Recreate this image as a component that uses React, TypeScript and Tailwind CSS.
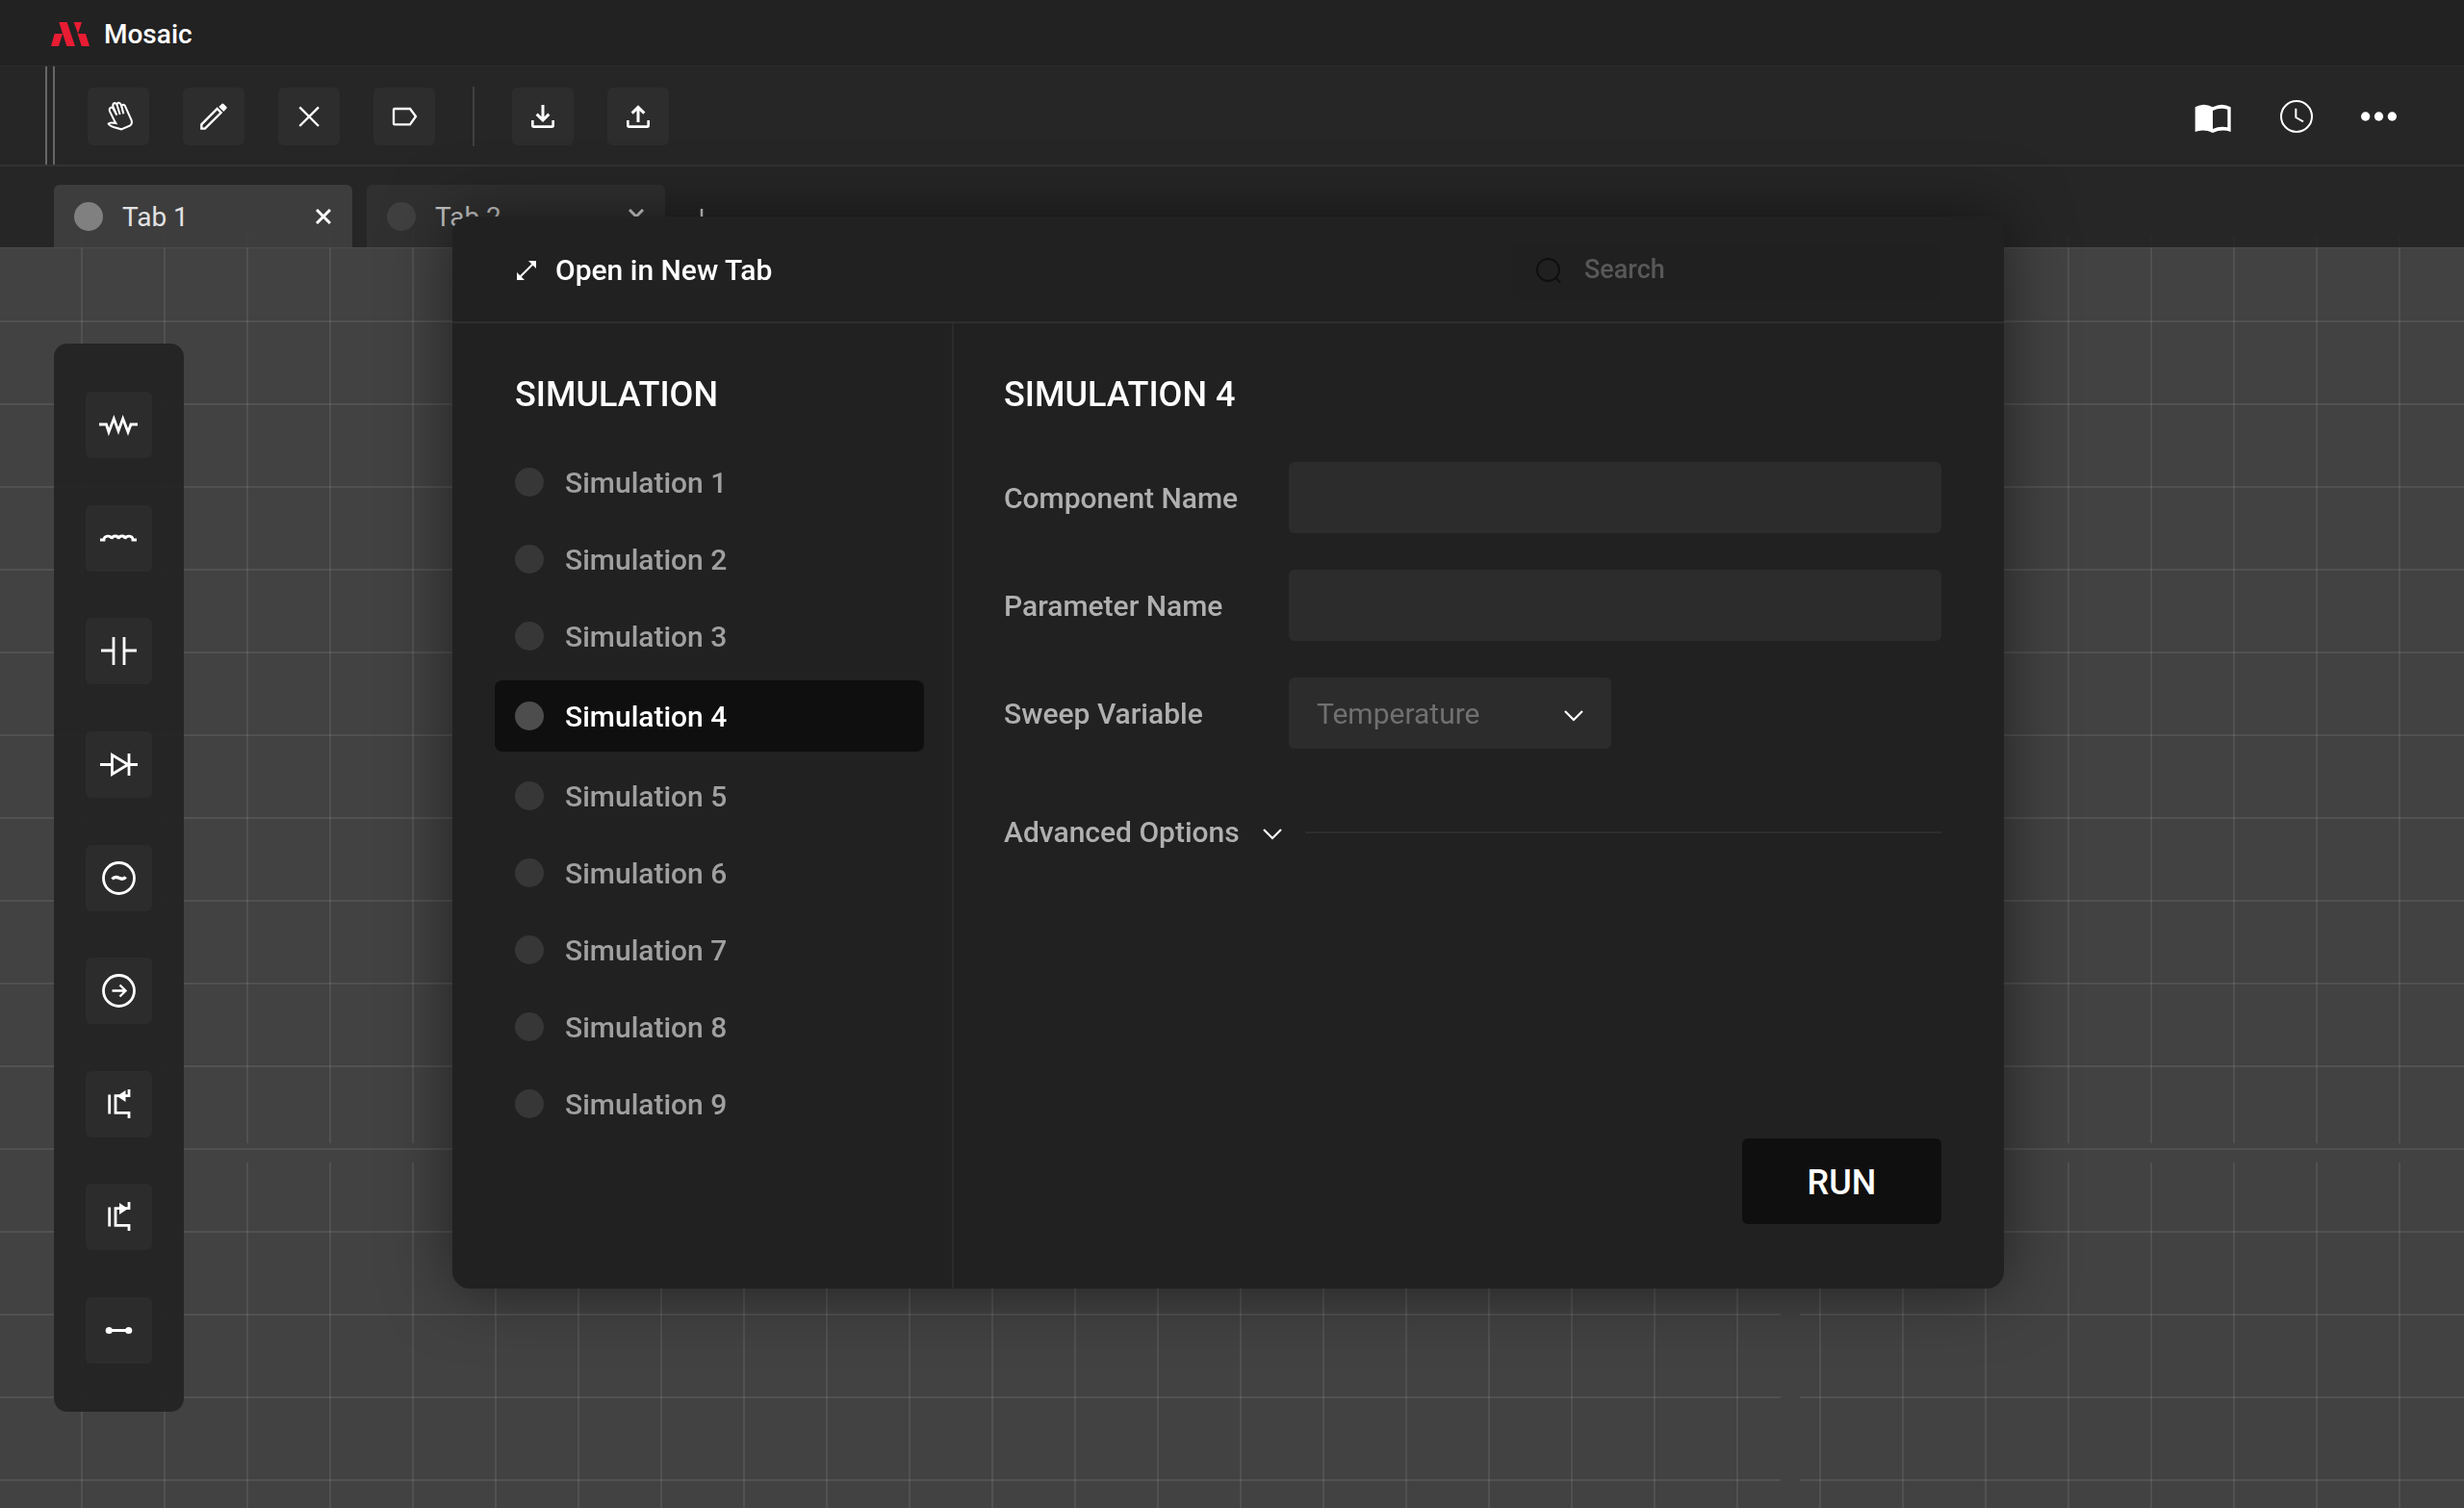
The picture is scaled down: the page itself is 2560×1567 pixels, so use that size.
import { useState, type ReactNode } from 'react';

type ToolIcon = { label: string; viewBox: string; art: ReactNode };

const editTools: ToolIcon[] = [
  {
    label: 'Pan',
    viewBox: '153 273 192 180',
    art: (
      <path
        d="M238 379L222 347Q219 337 226 335Q231 334 234 341L244 359L232 331Q231 322 238 321Q242 321 245 328L254 357L245 328Q245 319 251 320Q256 321 258 329L265 355L259 331Q263 322 269 329L290 375Q293 384 286 391L258 403L236 397Q220 391 218 386Q222 380 241 384Z"
        strokeWidth="6"
      />
    ),
  },
  {
    label: 'Draw',
    viewBox: '450 273 192 180',
    art: (
      <>
        <path d="M508 401V388L557 339L569 351L519 401Z" strokeWidth="7" />
        <path d="M562 333L572 323Q574 321 577 324L586 333Q589 336 586 338L577 348Z" fill="currentColor" stroke="none" />
      </>
    ),
  },
  {
    label: 'Delete',
    viewBox: '747 273 192 180',
    art: <path d="M814 334L873 393M873 334L814 393" strokeWidth="7" />,
  },
  {
    label: 'Label',
    viewBox: '1044 273 192 180',
    art: <path d="M1110 339H1158L1176 363L1158 388H1110Q1107 388 1107 385V342Q1107 339 1110 339Z" strokeWidth="7" />,
  },
];

const fileTools: ToolIcon[] = [
  {
    label: 'Download',
    viewBox: '276 93 192 180',
    art: (
      <>
        <path d="M372 147V194M353 176L372 195L391 176" strokeWidth="9" />
        <path d="M340 195V211Q340 215 344 215H400Q404 215 404 211V195" strokeWidth="8" />
      </>
    ),
  },
  {
    label: 'Upload',
    viewBox: '573 93 192 180',
    art: (
      <>
        <path d="M669 201V154M650 173L669 154L688 173" strokeWidth="9" />
        <path d="M637 195V211Q637 215 641 215H697Q701 215 701 211V195" strokeWidth="8" />
      </>
    ),
  },
];

const mosfet = 'M24.7 24.5V44.5M45 19V25.7H31V43.3H45V49';

const components: { label: string; art: ReactNode }[] = [
  { label: 'Resistor', art: <path d="M14 34H21.5L24 42L29.3 28L34 41L38.7 28L44 42L47 34H54" /> },
  { label: 'Inductor', art: <path d="M15 36H19C19 31 27 31 27 35C28 31 34 31 34 35C35 31 41 31 41 35C42 31 49 31 49 36H53" /> },
  { label: 'Capacitor', art: <path d="M16 34H29M29 20V49M40 20V49M40 34H53" /> },
  { label: 'Diode', art: <path d="M15 34.5H27.5M27.5 24.5V44.5L44 34.5ZM45 23V46M45 34.5H54" /> },
  {
    label: 'AC source',
    art: (
      <>
        <circle cx="34.5" cy="34.5" r="16" />
        <path d="M27.5 35.5C31 31.5 34 34 35.5 34.7C38 35.7 40 35.5 41.5 33.2" strokeWidth="3.4" />
      </>
    ),
  },
  {
    label: 'Current source',
    art: (
      <>
        <circle cx="34.5" cy="34.5" r="16" />
        <path d="M27.5 34.5H41M35.5 28.5L41.5 34.5L35.5 40.5" strokeWidth="2.4" />
      </>
    ),
  },
  {
    label: 'NMOS',
    art: (
      <>
        <path d={mosfet} />
        <path d="M32.5 26L41.5 20V32Z" fill="currentColor" stroke="none" />
      </>
    ),
  },
  {
    label: 'PMOS',
    art: (
      <>
        <path d={mosfet} />
        <path d="M44 26L35 20V32Z" fill="currentColor" stroke="none" />
      </>
    ),
  },
  {
    label: 'Wire',
    art: (
      <>
        <path d="M24 34.5H45" strokeWidth="3" />
        <circle cx="24.3" cy="34.5" r="3.6" fill="currentColor" stroke="none" />
        <circle cx="44.7" cy="34.5" r="3.6" fill="currentColor" stroke="none" />
      </>
    ),
  },
];

const simulations = [1, 2, 3, 4, 5, 6, 7, 8, 9];

function ToolButton({ label, viewBox, art }: ToolIcon) {
  return (
    <button type="button" aria-label={label} className="rounded-md bg-[#2d2d2d] text-white">
      <svg viewBox={viewBox} fill="none" stroke="currentColor" className="h-[60px] w-16">
        {art}
      </svg>
    </button>
  );
}

function Chevron({ className }: { className?: string }) {
  return (
    <svg viewBox="0 0 20 12" fill="none" stroke="currentColor" strokeWidth="2.2" className={`h-3 w-5 text-white ${className ?? ''}`}>
      <path d="M1 1L10 10L19 1" />
    </svg>
  );
}

function Tab({ name, active }: { name: string; active?: boolean }) {
  return (
    <div
      className={`flex h-[65px] w-[310px] items-center rounded-t-md pr-[22px] pl-[21px] ${
        active ? 'bg-[#3d3d3d] text-[#e2e2e2]' : 'bg-[#303030] text-[#c4c4c4]'
      }`}
    >
      <button type="button" className="flex flex-1 items-center gap-5 text-left">
        <span className={`size-[30px] rounded-full ${active ? 'bg-[#808080]' : 'bg-[#404040]'}`} />
        <span className="pt-[3px]">{name}</span>
      </button>
      <button type="button" aria-label={`Close ${name}`} className={active ? 'text-white' : 'text-[#d0d0d0]'}>
        <svg viewBox="0 0 16 16" stroke="currentColor" strokeWidth="3" className="size-4">
          <path d="M1 1L15 15M15 1L1 15" />
        </svg>
      </button>
    </div>
  );
}

function CanvasGrid() {
  return (
    <svg className="pointer-events-none absolute inset-0 size-full overflow-visible" aria-hidden="true">
      <defs>
        <pattern id="columns" width="86" height="86" patternUnits="userSpaceOnUse">
          <rect x="84" width="2" height="86" fill="#fff" fillOpacity="0.08" />
        </pattern>
        <pattern id="rows" width="86" height="86" patternUnits="userSpaceOnUse">
          <rect y="75" width="86" height="2" fill="#fff" fillOpacity="0.08" />
        </pattern>
      </defs>
      <rect y="-14" width="100%" height="14" fill="url(#columns)" opacity="0.15" />
      <rect width="100%" height="930" fill="url(#columns)" />
      <rect y="950" width="100%" height="100%" fill="url(#columns)" />
      <rect width="100%" height="950" fill="url(#rows)" />
      <rect y="950" width="1850" height="100%" fill="url(#rows)" />
      <rect x="1870" y="950" width="100%" height="100%" fill="url(#rows)" />
    </svg>
  );
}

function SimulationDialog() {
  const [selected, setSelected] = useState(4);
  return (
    <div className="fixed inset-0 flex items-center justify-center pr-2 pb-[3px]">
      <section
        role="dialog"
        aria-label="Simulation"
        className="flex min-h-[1114px] w-[1612px] max-w-full flex-col rounded-[18px] bg-[#212121] text-[30px] shadow-[0_0_68px_rgba(0,0,0,0.5)]"
      >
        <header className="flex h-[111px] items-center justify-between border-b-2 border-[#2e2e2e] pt-0.5 pr-[65px] pl-[67px]">
          <button type="button" className="flex items-center gap-5 font-medium text-white">
            <svg viewBox="0 0 20 20" className="size-5" fill="currentColor">
              <path d="M12 0H20V8ZM0 12V20H8Z" />
              <path d="M3 17L17 3" stroke="currentColor" strokeWidth="2" />
            </svg>
            Open in New Tab
          </button>
          <label className="flex h-[58px] w-[445px] items-center gap-6 rounded-md bg-[#202020] px-6">
            <svg viewBox="0 0 26 26" fill="none" stroke="#0f0f0f" strokeWidth="2" className="size-[26px] shrink-0">
              <circle cx="12.5" cy="12.5" r="11.5" />
              <path d="M20 20.5L25 25.5" />
            </svg>
            <input
              type="search"
              aria-label="Search"
              placeholder="Search"
              className="w-full min-w-0 bg-transparent text-[27px] font-medium text-[#9f9f9f] outline-none placeholder:text-[#585858]"
            />
          </label>
        </header>

        <div className="flex flex-1">
          <nav className="w-[521px] shrink-0 border-r-2 border-[#2a2a2a] pt-[52px] pr-[29px] pl-11">
            <h2 className="px-[21px] text-4xl leading-[44px] font-medium text-white">SIMULATION</h2>
            <ul className="mt-8 flex flex-col gap-1.5">
              {simulations.map((n) => (
                <li key={n} className={n === selected ? 'py-[3px]' : ''}>
                  <button
                    type="button"
                    onClick={() => setSelected(n)}
                    aria-current={n === selected}
                    className={`flex h-[74px] w-full items-center gap-[22px] rounded-lg px-[21px] font-medium ${
                      n === selected ? 'bg-[#0f0f0f] text-white' : 'text-[#a0a0a0]'
                    }`}
                  >
                    <span className={`size-[30px] rounded-full ${n === selected ? 'bg-[#4d4d4d]' : 'bg-[#373737]'}`} />
                    Simulation {n}
                  </button>
                </li>
              ))}
            </ul>
          </nav>

          <form
            className="flex flex-1 flex-col pt-[52px] pr-[65px] pb-[67px] pl-13 font-medium text-[#b0b0b0]"
            onSubmit={(e) => e.preventDefault()}
          >
            <h2 className="text-4xl leading-[44px] font-medium text-white">SIMULATION {selected}</h2>
            <div className="mt-12 grid grid-cols-[296px_1fr] items-center gap-y-[38px]">
              <label htmlFor="component">Component Name</label>
              <input id="component" type="text" className="h-[74px] rounded-md bg-[#2c2c2c] px-[30px] outline-none" />
              <label htmlFor="parameter">Parameter Name</label>
              <input id="parameter" type="text" className="h-[74px] rounded-md bg-[#2c2c2c] px-[30px] outline-none" />
              <label htmlFor="sweep">Sweep Variable</label>
              <div className="relative w-[335px]">
                <select
                  id="sweep"
                  className="h-[74px] w-full appearance-none rounded-md bg-[#2c2c2c] px-[29px] font-normal text-[#707070] outline-none"
                >
                  <option>Temperature</option>
                  <option>Voltage</option>
                  <option>Current</option>
                </select>
                <Chevron className="pointer-events-none absolute top-[34px] right-[29px]" />
              </div>
            </div>
            <div className="mt-16 flex items-center gap-6">
              <button type="button" className="flex items-center gap-6">
                Advanced Options
                <Chevron className="mt-1" />
              </button>
              <div className="h-0.5 flex-1 bg-[#2d2d2d]" />
            </div>
            <button
              type="submit"
              className="mt-auto h-[89px] w-[207px] self-end rounded-md bg-[#0f0f0f] pt-[3px] text-4xl font-medium text-white"
            >
              RUN
            </button>
          </form>
        </div>
      </section>
    </div>
  );
}

export default function App() {
  return (
    <div className="flex min-h-screen flex-col bg-[#262626] font-['Roboto',sans-serif] text-[28px]">
      <header className="flex h-[69px] items-center gap-[15px] border-b border-[#2c2c2c] bg-[#222222] pt-[3px] pl-[53px]">
        <svg viewBox="39 66 120 75" className="h-[25px] w-10" fill="#e81c33" aria-hidden="true">
          <path d="M50 102H75L63 141H39ZM64 66H89L114 141H88ZM110 66H135L123 102ZM122 102H147L159 141H134Z" />
        </svg>
        <h1 className="text-[28px] font-medium text-white">Mosaic</h1>
      </header>

      <div className="flex h-[104px] border-b-2 border-[#323232] pl-[47px]">
        <div className="w-2.5 border-x-2 border-[#666666]" />
        <div className="ml-[34px] flex items-center gap-[39px] pt-0.5">
          <div className="flex gap-[35px]">
            {editTools.map((tool) => (
              <ToolButton key={tool.label} {...tool} />
            ))}
          </div>
          <div className="h-[62px] w-0.5 bg-[#404040]" />
          <div className="flex gap-[35px]">
            {fileTools.map((tool) => (
              <ToolButton key={tool.label} {...tool} />
            ))}
          </div>
        </div>
        <div className="mr-[70px] ml-auto flex items-center gap-[50px] pt-0.5 text-white">
          <button type="button" aria-label="Library">
            <svg viewBox="243 132 117 99" className="h-[33px] w-[39px]" fill="currentColor">
              <path
                fillRule="evenodd"
                d="M245 151Q272 136 300 151Q328 136 356 151V228Q328 218 300 231Q272 218 245 228ZM300 162V219Q322 209 346 214V158Q322 151 300 162Z"
              />
            </svg>
          </button>
          <button type="button" aria-label="History">
            <svg viewBox="510 132 102 102" className="size-[34px]" fill="none" stroke="currentColor" strokeWidth="6">
              <circle cx="561" cy="183" r="48" />
              <path d="M559 158V186L582 199" />
            </svg>
          </button>
          <button type="button" aria-label="More">
            <svg viewBox="759 165 111 30" className="h-2.5 w-[37px]" fill="currentColor">
              <circle cx="773" cy="180" r="14" />
              <circle cx="814.5" cy="180" r="14" />
              <circle cx="856" cy="180" r="14" />
            </svg>
          </button>
        </div>
      </div>

      <div className="flex h-[84px] items-end gap-[15px] pl-14">
        <Tab name="Tab 1" active />
        <Tab name="Tab 2" />
        <button type="button" aria-label="New tab" className="mb-5 ml-[13px] text-[#d0d0d0]">
          <svg viewBox="0 0 20 20" stroke="currentColor" strokeWidth="2.5" className="size-5">
            <path d="M10 0V20M0 10H20" />
          </svg>
        </button>
      </div>

      <main className="relative flex flex-1 border-t border-[#4c4c4c] bg-[#424242] pt-[99px] pb-[100px] pl-14">
        <CanvasGrid />
        <aside className="relative flex w-[135px] flex-col items-center justify-between rounded-[14px] bg-[#242424]/95 py-[50px]">
          {components.map(({ label, art }) => (
            <button key={label} type="button" aria-label={label} className="rounded-md bg-[#2d2d2d]/90 text-white">
              <svg viewBox="0 0 69 69" fill="none" stroke="currentColor" strokeWidth="2.8" className="size-[69px]">
                {art}
              </svg>
            </button>
          ))}
        </aside>
      </main>

      <SimulationDialog />
    </div>
  );
}
